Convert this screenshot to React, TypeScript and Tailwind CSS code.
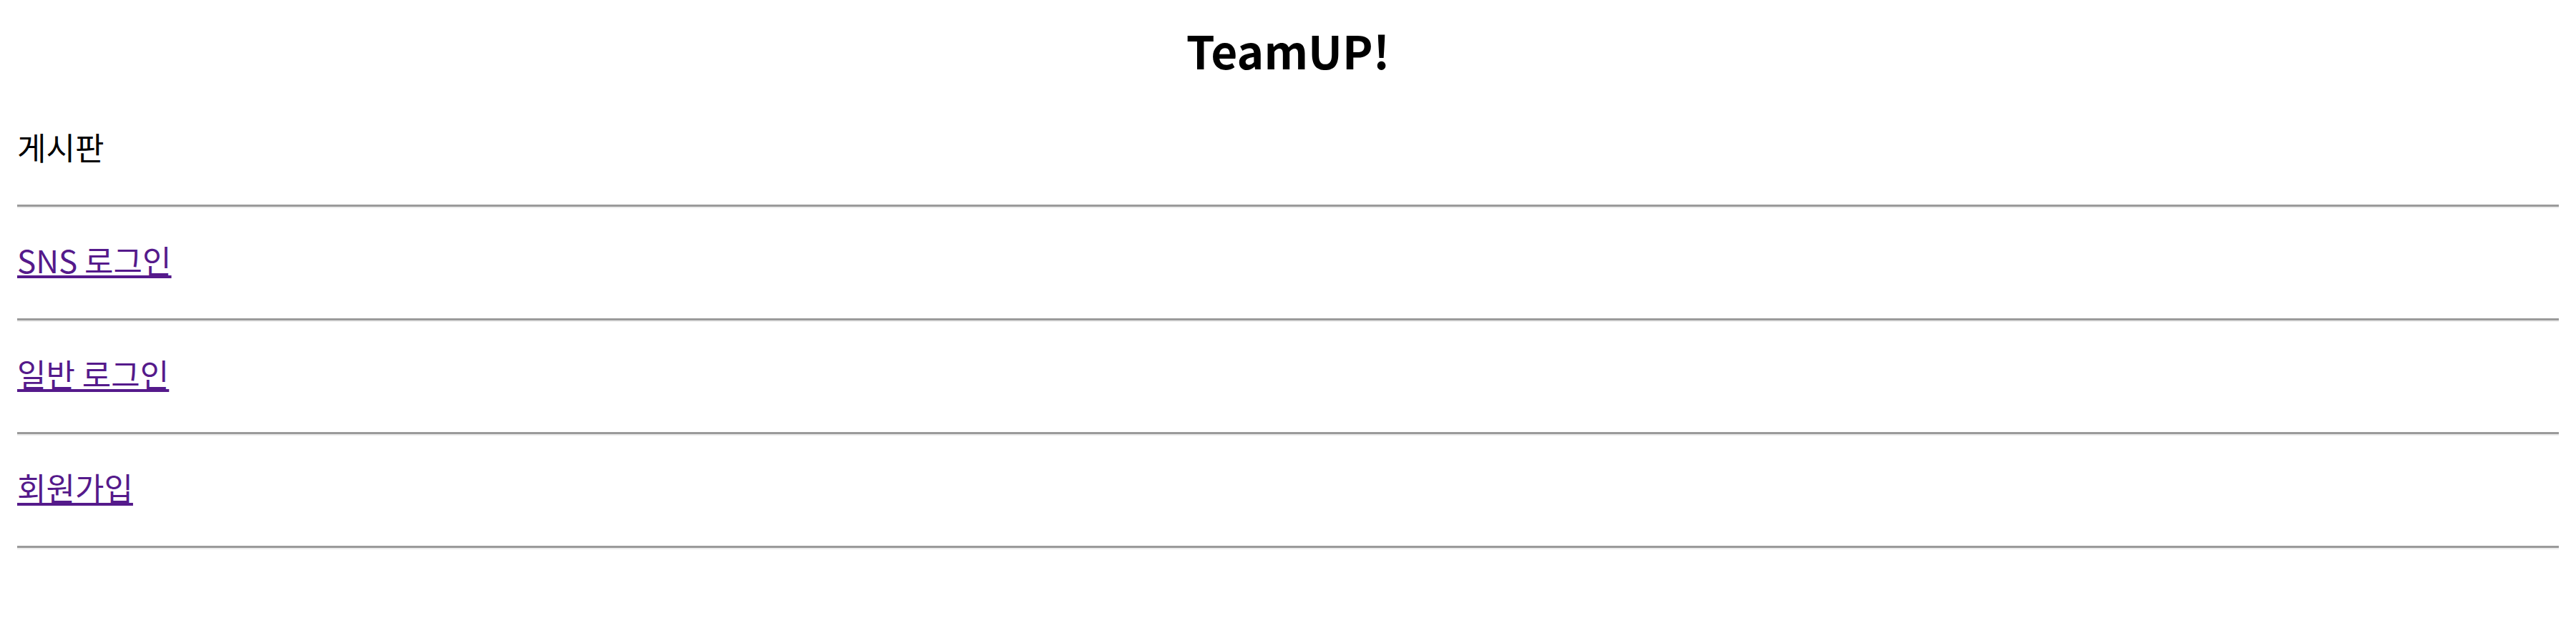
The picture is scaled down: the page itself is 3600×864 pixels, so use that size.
import React from "react";

const font = { fontFamily: '"Noto Sans CJK KR", "Noto Sans", sans-serif' };

function Rule({ first }: { first?: boolean }) {
  return (
    <div
      className={`${first ? "mt-[59px]" : "mt-[60px]"} h-0 border-t-[3px] border-b-[2px] border-t-[#9a9a9a] border-b-[#ececec]`}
    />
  );
}

function LinkRow({ label }: { label: string }) {
  return (
    <>
      <div className="mt-[50px] h-[44px] text-[44px] leading-[44px]">
        <a
          href="#"
          className="text-[#551a8b] underline decoration-4 underline-offset-[3px]"
        >
          {label}
        </a>
      </div>
      <Rule />
    </>
  );
}

export default function App() {
  return (
    <div className="min-h-[864px] w-full bg-white px-[24px] pt-[37px] text-black" style={font}>
      <h1 className="h-[64px] text-center text-[64px] font-bold leading-[64px]">TeamUP!</h1>
      <div className="mt-[82px] h-[44px] text-[44px] leading-[44px]">게시판</div>
      <Rule first />
      <LinkRow label="SNS 로그인" />
      <LinkRow label="일반 로그인" />
      <LinkRow label="회원가입" />
    </div>
  );
}
